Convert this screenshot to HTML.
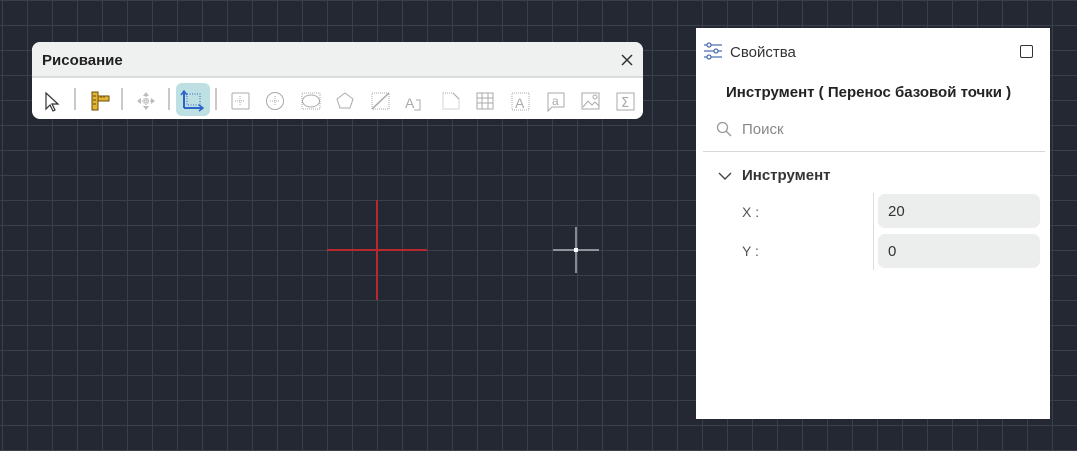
<!DOCTYPE html>
<html><head><meta charset="utf-8"><style>
*{margin:0;padding:0;box-sizing:border-box}
body{width:1077px;height:451px;overflow:hidden;position:relative;font-family:"Liberation Sans","Noto Sans CJK SC",sans-serif;
background-color:#232832;
background-image:linear-gradient(to right,#3a404b 1px,transparent 1px),linear-gradient(to bottom,#3a404b 1px,transparent 1px);
background-size:25px 25px;background-position:2px 0px}
.tb{position:absolute;left:32px;top:42px;width:611px;height:77px;background:#fff;border-radius:8px;overflow:hidden}
.tb .hd{height:36px;background:#eff0f0;border-bottom:2px solid #d9dcdc;position:relative}
.tb .hd span{position:absolute;left:10px;top:10px;font-size:15px;font-weight:bold;color:#222}
.sep{position:absolute;top:46px;width:2px;height:22px;background:#c8caca}
.panel{position:absolute;left:696px;top:28px;width:354px;height:391px;background:#fff}
.t{position:absolute;white-space:nowrap}
.inp{position:absolute;left:182px;width:162px;height:34px;background:#eceded;border-radius:7px;font-size:15px;color:#333;padding:9px 10px}
</style></head><body>
<svg style="position:absolute;left:0;top:0" width="1077" height="451">
<line x1="327" y1="250" x2="427" y2="250" stroke="#b8292f" stroke-width="2"/>
<line x1="377" y1="200" x2="377" y2="300" stroke="#b8292f" stroke-width="2"/>
<line x1="553" y1="250" x2="599" y2="250" stroke="#c8ccd2" stroke-width="1.2"/>
<line x1="576" y1="227" x2="576" y2="273" stroke="#c8ccd2" stroke-width="1.2"/>
<rect x="574" y="248" width="4" height="4" fill="#fff"/>
</svg>
<div class="tb">
<div class="hd"><span>Рисование</span>
<svg style="position:absolute;right:10px;top:12px" width="12" height="12"><path d="M1 1L11 11M11 1L1 11" stroke="#333" stroke-width="1.5"/></svg></div>
<div style="position:absolute;left:144px;top:41px;width:34px;height:33px;background:#bfe0e2;border-radius:6px"></div>
<div class="sep" style="left:42px"></div><div class="sep" style="left:89px"></div><div class="sep" style="left:136px"></div><div class="sep" style="left:183px"></div>
<svg style="position:absolute;left:0;top:40px" width="611" height="37" fill="none" stroke="#aaa" stroke-width="1">
<path d="M14 11L14 27L18 23L21 29L23 28L20 22L26 22Z" stroke="#333" stroke-width="1.2"/>
<g stroke="#6b4b00" fill="#e2b43a"><rect x="60" y="10" width="6" height="18"/><rect x="66" y="14" width="11" height="5"/></g>
<path d="M61 14h3M61 18h3M61 22h3M69 14v2M72 14v2" stroke="#6b4b00"/>
<g stroke="#aaa" stroke-dasharray="1 1"><path d="M114 12v14M106 19h16"/></g><path d="M114 10l-3 4h6zM114 28l-3-4h6zM105 19l4-3v6zM123 19l-4-3v6z" fill="#bbb" stroke="none"/><rect x="112" y="17" width="4" height="4" stroke="#bbb"/>
<path d="M152 26h18" stroke="#2a64c8" stroke-width="2"/><path d="M152 10v16" stroke="#2a64c8" stroke-width="2"/><path d="M149 13l3-4 3 4M167 23l4 3-4 3" stroke="#2a64c8" stroke-width="1.5"/><rect x="155" y="12" width="13" height="11" stroke="#2a64c8" stroke-dasharray="1 1.5"/>
<rect x="200" y="11" width="17" height="16" rx="1"/><path d="M208 14v10M203 19h10" stroke-dasharray="1 1"/>
<circle cx="243" cy="19" r="8.5"/><path d="M243 14v10M238 19h10" stroke-dasharray="1 1"/>
<ellipse cx="279" cy="19" rx="8.5" ry="6"/><rect x="270" y="11" width="18" height="16" stroke-dasharray="1 1"/>
<path d="M313 11l8 6-3 9h-10l-3-9z"/>
<rect x="340" y="11" width="17" height="16" stroke-dasharray="1 1"/><path d="M340 27l17-16" stroke-width="1.5"/>
<text x="373" y="26" font-size="14" fill="#aaa" stroke="none" font-family="Liberation Sans">A</text><path d="M384 18h4v10h-6"/>
<path d="M411 11h10l6 6v10h-16z" stroke-dasharray="1 1"/><path d="M421 11l6 6"/>
<rect x="445" y="11" width="16" height="16"/><path d="M445 16h16M445 21h16M450 11v16M456 11v16"/>
<rect x="480" y="11" width="17" height="17" stroke-dasharray="1 1"/><text x="483" y="26" font-size="14" fill="#aaa" stroke="none" font-family="Liberation Sans">A</text>
<path d="M516 11h16v14h-12l-4 4z"/><text x="520" y="23" font-size="12" fill="#aaa" stroke="none" font-family="Liberation Sans">a</text>
<rect x="550" y="11" width="17" height="16"/><path d="M551 25l5-6 4 4 3-3 4 4"/><circle cx="563" cy="15" r="2"/>
<rect x="585" y="11" width="17" height="17"/><text x="589" y="25" font-size="13" fill="#aaa" stroke="none" font-family="DejaVu Sans">Σ</text>
</svg>
</div>
<div class="panel">
<svg style="position:absolute;left:8px;top:14px" width="18" height="18" fill="none" stroke="#4a6fb5" stroke-width="1.3"><path d="M0 3h18M0 9h18M0 15h18"/><circle cx="5" cy="3" r="2" fill="#fff"/><circle cx="12" cy="9" r="2" fill="#fff"/><circle cx="5" cy="15" r="2" fill="#fff"/></svg>
<div class="t" style="left:34px;top:16px;font-size:15px;color:#333">Свойства</div>
<div style="position:absolute;left:324px;top:17px;width:13px;height:13px;border:1.5px solid #333;border-radius:2px"></div>
<div class="t" style="left:30px;top:56px;font-size:15px;font-weight:bold;color:#222">Инструмент ( Перенос базовой точки )</div>
<svg style="position:absolute;left:20px;top:93px" width="16" height="16" fill="none" stroke="#999" stroke-width="1.3"><circle cx="6.5" cy="6.5" r="5"/><path d="M10 10l5 5"/></svg>
<div class="t" style="left:46px;top:93px;font-size:15px;color:#888">Поиск</div>
<div style="position:absolute;left:7px;top:123px;width:342px;height:1px;background:#d8d8d8"></div>
<svg style="position:absolute;left:22px;top:144px" width="14" height="9" fill="none" stroke="#444" stroke-width="1.4"><path d="M1 1l6 6 6-6"/></svg>
<div class="t" style="left:46px;top:139px;font-size:15px;font-weight:bold;color:#333">Инструмент</div>
<div style="position:absolute;left:177px;top:165px;width:1px;height:77px;background:#ddd"></div>
<div class="t" style="left:46px;top:176px;font-size:14px;color:#555">X :</div>
<div class="t" style="left:46px;top:215px;font-size:14px;color:#555">Y :</div>
<div class="inp" style="top:166px">20</div>
<div class="inp" style="top:206px">0</div>
</div>
</body></html>
